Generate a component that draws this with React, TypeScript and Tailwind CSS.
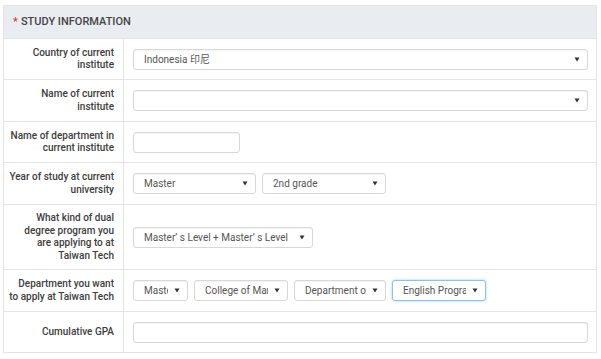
import React from 'react'

const font = { fontFamily: 'Roboto, "Noto Sans CJK SC", sans-serif' }

function Caret() {
  return (
    <svg width="6" height="5" viewBox="0 0 6 5" className="shrink-0">
      <path d="M0.5 0.5 L5.5 0.5 L3 4.5 Z" fill="#333" />
    </svg>
  )
}

function Select({ value, className = '', focus = false }: { value?: React.ReactNode; className?: string; focus?: boolean }) {
  return (
    <div
      className={`h-[21px] flex items-center pl-[10px] pr-[7px] rounded-[3px] bg-white border ${
        focus ? 'border-[#8fc0ea] shadow-[0_0_3px_rgba(102,175,233,0.6)]' : 'border-[#d8d8d8] shadow-[inset_0_1px_1px_rgba(0,0,0,0.05)]'
      } ${className}`}
    >
      <div className="flex-1 min-w-0 overflow-hidden whitespace-nowrap text-[10px] text-[#555] mr-[6px]">{value}</div>
      <Caret />
    </div>
  )
}

function Input({ className = '' }: { className?: string }) {
  return <div className={`h-[21px] rounded-[3px] bg-white border border-[#d8d8d8] shadow-[inset_0_1px_1px_rgba(0,0,0,0.05)] ${className}`} />
}

function Row({ label, h, children, last = false }: { label: React.ReactNode; h: string; children: React.ReactNode; last?: boolean }) {
  return (
    <div className={`flex ${h} ${last ? '' : 'border-b border-[#e4e4e4]'}`}>
      <div className="w-[120px] shrink-0 border-r border-[#e4e4e4] flex items-center justify-end pr-[9px] text-right text-[10px] leading-[12.5px] font-medium text-[#3d3d3d] whitespace-nowrap">
        <div>{label}</div>
      </div>
      <div className="flex-1 flex items-center pl-[9px] pr-[9px] gap-[6px]">{children}</div>
    </div>
  )
}

export default function App() {
  return (
    <div className="w-[601px] h-[359px] bg-white pt-[5px] pl-[3px]" style={font}>
      <div className="w-[594px] border border-[#e4e4e4]">
        <div className="h-[33px] bg-[#e9ecf0] flex items-center pl-[9px] text-[11px] font-medium text-[#444] border-b border-[#e4e4e4]">
          <span className="text-[#e03c3c] mr-[3px]">*</span>STUDY INFORMATION
        </div>
        <Row label={<>Country of current<br />institute</>} h="h-[41px]">
          <Select value="Indonesia 印尼" className="w-[455px]" />
        </Row>
        <Row label={<>Name of current<br />institute</>} h="h-[42px]">
          <Select className="w-[455px]" />
        </Row>
        <Row label={<>Name of department in<br />current institute</>} h="h-[41px]">
          <Input className="w-[107px]" />
        </Row>
        <Row label={<>Year of study at current<br />university</>} h="h-[42px]">
          <Select value="Master" className="w-[123px]" />
          <Select value="2nd grade" className="w-[124px]" />
        </Row>
        <Row label={<>What kind of dual<br />degree program you<br />are applying to at<br />Taiwan Tech</>} h="h-[65px]">
          <Select value="Master’ s Level + Master’ s Level" className="w-[180px]" />
        </Row>
        <Row label={<>Department you want<br />to apply at Taiwan Tech</>} h="h-[42px]">
          <Select value="Master" className="w-[55px]" />
          <Select value="College of Management" className="w-[94px]" />
          <Select value="Department of Information Management" className="w-[92px]" />
          <Select value="English Program" className="w-[94px]" focus />
        </Row>
        <Row label="Cumulative GPA" h="h-[40px]" last>
          <Input className="w-[455px]" />
        </Row>
      </div>
    </div>
  )
}
